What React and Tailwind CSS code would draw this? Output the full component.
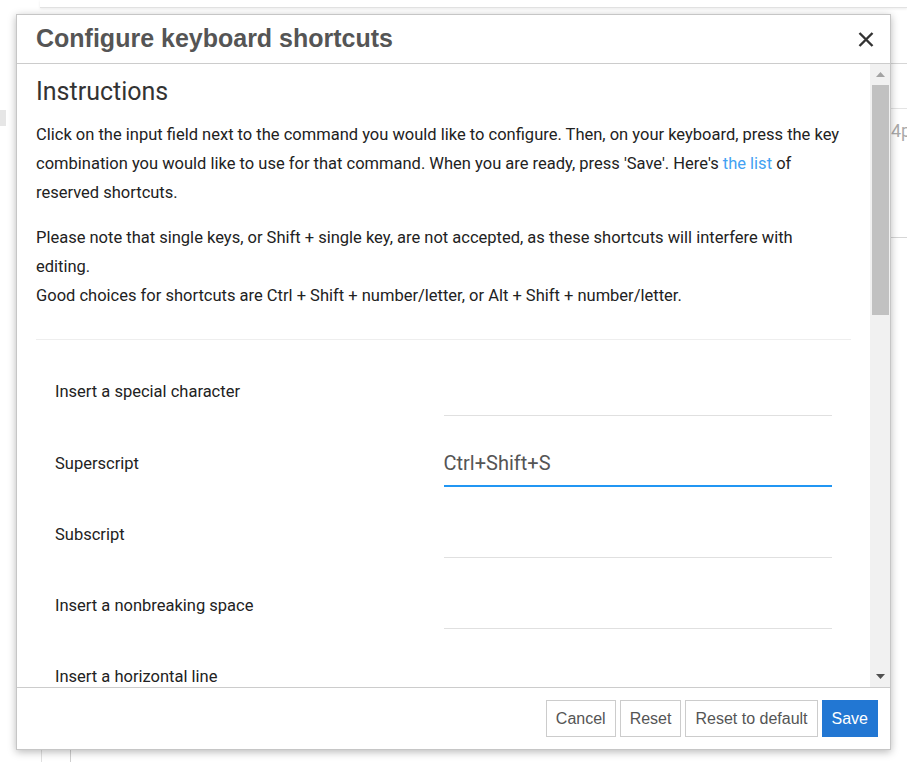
import React from "react"

const rows = [
  { label: "Insert a special character", value: "" },
  { label: "Superscript", value: "Ctrl+Shift+S", active: true },
  { label: "Subscript", value: "" },
  { label: "Insert a nonbreaking space", value: "" },
  { label: "Insert a horizontal line", value: "" },
]

const ShortcutRow = ({ label, value, active }) => (
  <div className="grid grid-cols-2 items-center h-[71.25px] shrink-0">
    <div className="text-[16.5px] text-[#222]">{label}</div>
    <div
      className={
        active
          ? "h-[46px] flex items-center border-b-2 border-[#2196f3] text-[20px] text-[#555]"
          : "h-[46px] flex items-center border-b border-[#e0e0e0] text-[20px] text-[#555]"
      }
    >
      {value}
    </div>
  </div>
)

const FooterButton = ({ children, primary }) => (
  <button
    className={
      primary
        ? "h-[37px] px-[9px] bg-[#2277d3] border border-[#2277d3] text-white text-[16px]"
        : "h-[37px] px-[9px] bg-white border border-[#cccccc] text-[#555] text-[16px]"
    }
    style={{ fontFamily: '"Liberation Sans", Arial, sans-serif' }}
  >
    {children}
  </button>
)

export default function App() {
  return (
    <div
      className="relative h-[762px] w-full overflow-hidden bg-white"
      style={{ fontFamily: 'Roboto, "Noto Sans", sans-serif' }}
    >
      {/* page behind the dialog */}
      <div className="absolute left-[40px] right-0 top-0 h-[8px] border-b border-[#e2e2e2] shadow-[0_1px_3px_rgba(0,0,0,0.08)]" />
      <div className="absolute left-0 top-[110px] w-[6px] h-[16px] bg-[#e6e6e6]" />
      <div className="absolute left-[880px] right-0 top-[63px] border-t border-[#d6d6d6]" />
      <div className="absolute left-[880px] right-0 top-[108px] border-t border-[#e4e4e4]" />
      <div className="absolute left-[880px] right-0 top-[237px] border-t border-[#d6d6d6]" />
      <div className="absolute left-[891px] top-[117px] text-[18px] text-[#aaa]">4p</div>
      <div className="absolute left-[41px] top-[740px] h-[30px] border-l border-[#e0e0e0]" />
      <div className="absolute left-[70px] top-[740px] h-[30px] border-l border-[#cfcfcf]" />

      {/* dialog */}
      <div className="absolute left-[16px] top-[14px] w-[875px] h-[736px] flex flex-col bg-white border border-[#c6c6c6] shadow-[0_2px_8px_rgba(0,0,0,0.28)]">
        <div className="h-[49px] shrink-0 flex items-center justify-between pl-[19px] pr-[16px] border-b border-[#cccccc]">
          <h2
            className="text-[25px] font-bold text-[#555]"
            style={{ fontFamily: '"Liberation Sans", Arial, sans-serif' }}
          >
            Configure keyboard shortcuts
          </h2>
          <button className="w-[16px] h-[16px] flex items-center justify-center">
            <svg width="16" height="15" viewBox="0 0 16 15">
              <path d="M1.5 1 L14.5 14 M14.5 1 L1.5 14" stroke="#333" strokeWidth="2.4" />
            </svg>
          </button>
        </div>

        <div className="flex-1 min-h-0 flex">
          <div className="flex-1 overflow-hidden pl-[19px] pr-[19px] pt-[15px]">
            <h3 className="text-[25px] leading-[26px] text-[#333] mb-[15px]">Instructions</h3>
            <p className="text-[16.5px] leading-[29px] text-[#222] mb-[16px]">
              Click on the input field next to the command you would like to configure. Then, on your keyboard, press
              the key combination you would like to use for that command. When you are ready, press 'Save'. Here's{" "}
              <a className="text-[#42a1f2]">the list</a> of reserved shortcuts.
            </p>
            <p className="text-[16.5px] leading-[29px] text-[#222] mb-[16px]">
              Please note that single keys, or Shift + single key, are not accepted, as these shortcuts will interfere
              with
              <br />
              editing.
              <br />
              Good choices for shortcuts are Ctrl + Shift + number/letter, or Alt + Shift + number/letter.
            </p>
            <div className="mt-[29px] border-t border-[#eeeeee]" />
            <div className="flex flex-col px-[19px] pt-[17px]">
              {rows.map((r) => (
                <ShortcutRow key={r.label} {...r} />
              ))}
            </div>
          </div>

          {/* scrollbar */}
          <div className="w-[20px] shrink-0 bg-[#f1f1f1] flex flex-col items-center pl-[2px] pr-[1px]">
            <div className="h-[21px] flex items-center justify-center">
              <svg width="9" height="5" viewBox="0 0 9 5">
                <path d="M0 5 L4.5 0 L9 5 Z" fill="#a3a3a3" />
              </svg>
            </div>
            <div className="w-full h-[230px] bg-[#c1c1c1]" />
            <div className="flex-1" />
            <div className="h-[21px] flex items-center justify-center">
              <svg width="9" height="5" viewBox="0 0 9 5">
                <path d="M0 0 L9 0 L4.5 5 Z" fill="#505050" />
              </svg>
            </div>
          </div>
        </div>

        <div className="h-[62px] shrink-0 border-t border-[#cccccc] flex items-start justify-end gap-[4px] pt-[12px] pr-[12px]">
          <FooterButton>Cancel</FooterButton>
          <FooterButton>Reset</FooterButton>
          <FooterButton>Reset to default</FooterButton>
          <FooterButton primary>Save</FooterButton>
        </div>
      </div>
    </div>
  )
}
